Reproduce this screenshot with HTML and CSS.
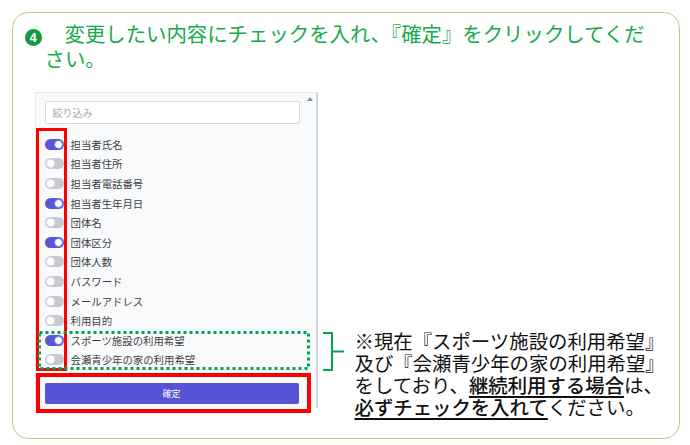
FILE: index.html
```html
<!DOCTYPE html>
<html lang="ja">
<head>
<meta charset="utf-8">
<link rel="stylesheet" href="styles.css">
</head>
<body>
<div class="frame">
  <p class="title"><span class="num">4</span>変更したい内容にチェックを入れ、『確定』をクリックしてくだ<br>さい。</p>
  <div class="content">
    <div class="panel">
      <span class="scroll-arrow"></span>
      <div class="filter">絞り込み</div>
      <ul class="list">
        <li class="row"><span class="toggle on"></span>担当者氏名</li>
        <li class="row"><span class="toggle"></span>担当者住所</li>
        <li class="row"><span class="toggle"></span>担当者電話番号</li>
        <li class="row"><span class="toggle on"></span>担当者生年月日</li>
        <li class="row"><span class="toggle"></span>団体名</li>
        <li class="row"><span class="toggle on"></span>団体区分</li>
        <li class="row"><span class="toggle"></span>団体人数</li>
        <li class="row"><span class="toggle"></span>パスワード</li>
        <li class="row"><span class="toggle"></span>メールアドレス</li>
        <li class="row"><span class="toggle"></span>利用目的</li>
        <li class="row"><span class="toggle on"></span>スポーツ施設の利用希望</li>
        <li class="row"><span class="toggle"></span>会瀬青少年の家の利用希望</li>
      </ul>
      <div class="confirm">確定</div>
      <svg class="mark mark-dots" width="272" height="39" viewBox="0 0 272 39">
        <rect x="1.5" y="1.5" width="269" height="36" fill="none" stroke="#00a54f" stroke-width="3" stroke-dasharray="3 3"/>
      </svg>
      <div class="mark mark-toggles"></div>
      <div class="mark mark-button"></div>
    </div>
    <div class="note">
      <svg class="brace" width="21" height="40" viewBox="0 0 21 40">
        <path d="M0 1 H9 V38 H0 M9 19.5 H21" fill="none" stroke="#00a54f" stroke-width="2"/>
      </svg>
      <p class="note-text">※現在『スポーツ施設の利用希望』<br>及び『会瀬青少年の家の利用希望』<br>をしており、<b class="em">継続利用する場合</b>は、<br><b class="em">必ずチェックを入れて</b>ください。</p>
    </div>
  </div>
</div>
</body>
</html>
```

FILE: styles.css
```css
html, body {
  margin: 0;
  padding: 0;
  background: #ffffff;
}

body {
  font-family: "Noto Sans CJK JP", "Noto Sans", sans-serif;
}

.frame {
  box-sizing: border-box;
  margin: 12px 0 0 12px;
  width: 668px;
  height: 427px;
  border: 1.5px solid #a9d08e;
  border-radius: 16px;
}

.title {
  margin: 0;
  padding: 8px 0 0 31.5px;
  text-indent: -20px;
  font-size: 20.4px;
  line-height: 25px;
  color: #17aa4c;
  white-space: nowrap;
}

.num {
  display: inline-block;
  width: 17px;
  height: 17px;
  margin-right: 23px;
  border-radius: 50%;
  background: #129a43;
  color: #ffffff;
  font-family: "Liberation Sans", sans-serif;
  font-weight: bold;
  font-size: 13px;
  line-height: 17px;
  text-align: center;
  text-indent: 0;
  vertical-align: 0;
}

.content {
  display: flex;
  align-items: flex-start;
  margin: 20.5px 0 0 21.5px;
}

.panel {
  position: relative;
  box-sizing: border-box;
  width: 283px;
  height: 316px;
  padding: 8px 0 0 9px;
  background: #f9fafc;
  border-top: 1px solid #e6e8ee;
  border-left: 1px solid #e6e8ee;
  border-right: 2px solid #cdd5e6;
}

.scroll-arrow {
  position: absolute;
  top: 4px;
  right: 3px;
  width: 0;
  height: 0;
  border-left: 3px solid transparent;
  border-right: 3px solid transparent;
  border-bottom: 4px solid #8a8d93;
}

.filter {
  box-sizing: border-box;
  width: 255px;
  height: 23px;
  padding-left: 7px;
  border: 1px solid #d8dbe2;
  border-radius: 2px;
  background: #ffffff;
  color: #a3a7ae;
  font-size: 10px;
  line-height: 21px;
}

.list {
  list-style: none;
  margin: 11px 0 0 0;
  padding: 0;
}

.row {
  display: flex;
  align-items: center;
  gap: 7px;
  height: 19.6px;
  font-size: 10.4px;
  color: #3d3f44;
}

.toggle {
  position: relative;
  box-sizing: border-box;
  width: 19px;
  height: 11px;
  border-radius: 5.5px;
  background: #c6c9d0;
  flex: none;
}

.toggle::after {
  content: "";
  position: absolute;
  top: 1px;
  left: 1px;
  box-sizing: border-box;
  width: 9px;
  height: 9px;
  border-radius: 50%;
  background: #ffffff;
  border: 1px solid #e4e6ea;
}

.toggle.on {
  background: #5755d8;
}

.toggle.on::after {
  left: 9px;
  border-color: #7775e2;
}

.confirm {
  box-sizing: border-box;
  width: 254px;
  height: 21px;
  margin-top: 13px;
  border-radius: 2px;
  background: #5553d6;
  color: #ffffff;
  font-size: 9px;
  line-height: 21px;
  text-align: center;
}

.mark {
  position: absolute;
  box-sizing: border-box;
}

.mark-toggles {
  left: 0;
  top: 35px;
  width: 31px;
  height: 243px;
  border: 3px solid #ff0000;
}

.mark-dots {
  left: 2px;
  top: 238px;
  z-index: 1;
}

.mark-button {
  left: 0;
  top: 280px;
  width: 275px;
  height: 40px;
  border: 4px solid #ff0000;
}

.note {
  display: flex;
  align-items: flex-start;
  margin: 238px 0 0 5px;
}

.brace {
  display: block;
  margin-top: 2px;
  flex: none;
}

.note-text {
  margin: 0 0 0 11px;
  font-size: 19.4px;
  line-height: 22.3px;
  color: #111111;
  white-space: nowrap;
}

.em {
  font-weight: 500;
  text-decoration: underline;
  text-decoration-thickness: 1.5px;
  text-underline-offset: 3px;
}
```
